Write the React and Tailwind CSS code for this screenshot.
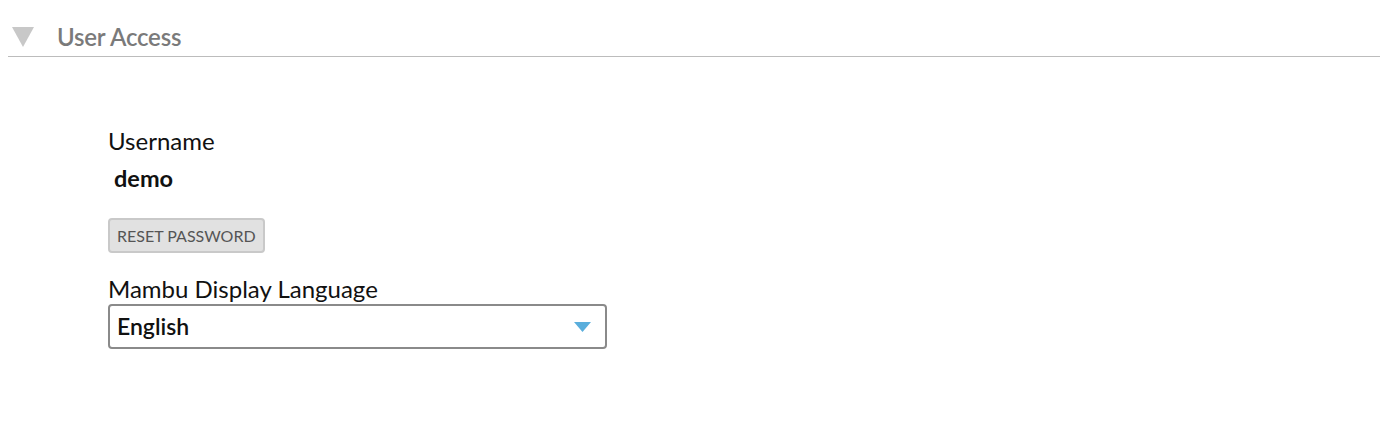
export default function App() {
  return (
    <div className="w-[1386px] h-[434px] bg-white font-['Lato','Liberation_Sans',sans-serif]">
      <div className="ml-2 mr-[6px] pt-[17px]">
        <div className="flex items-center h-[40px] border-b border-[#bcbcbc]">
          <svg width="22" height="20" viewBox="0 0 22 20" className="ml-[4px] mt-[1px]">
            <polygon points="0,0 22,0 11,20" fill="#c8c8c8" />
          </svg>
          <span className="ml-[23px] text-[24px] text-[#7a7a7a] font-semibold tracking-[-0.2px]">User Access</span>
        </div>
      </div>
      <div className="pl-[108px] pt-[69px] text-[#111]">
        <div className="text-[24px] leading-[30px]">Username</div>
        <div className="pl-[6px] text-[23.5px] leading-[30px] font-bold mt-[7px]">demo</div>
        <button className="mt-[25px] h-[35px] px-[7px] bg-[#e1e1e1] border-2 border-[#c9c9c9] rounded-[4px] text-[16px] text-[#555] uppercase">
          Reset Password
        </button>
        <div className="mt-[21px] text-[24px] leading-[30px]">Mambu Display Language</div>
        <div className="w-[499px] h-[45px] border-2 border-[#8a8a8a] rounded-[4px] flex items-center justify-between pl-[7px] pr-[14px]">
          <span className="text-[23px] font-semibold">English</span>
          <svg width="17" height="10" viewBox="0 0 17 10">
            <polygon points="0,0 17,0 8.5,10" fill="#5aaedc" />
          </svg>
        </div>
      </div>
    </div>
  );
}
